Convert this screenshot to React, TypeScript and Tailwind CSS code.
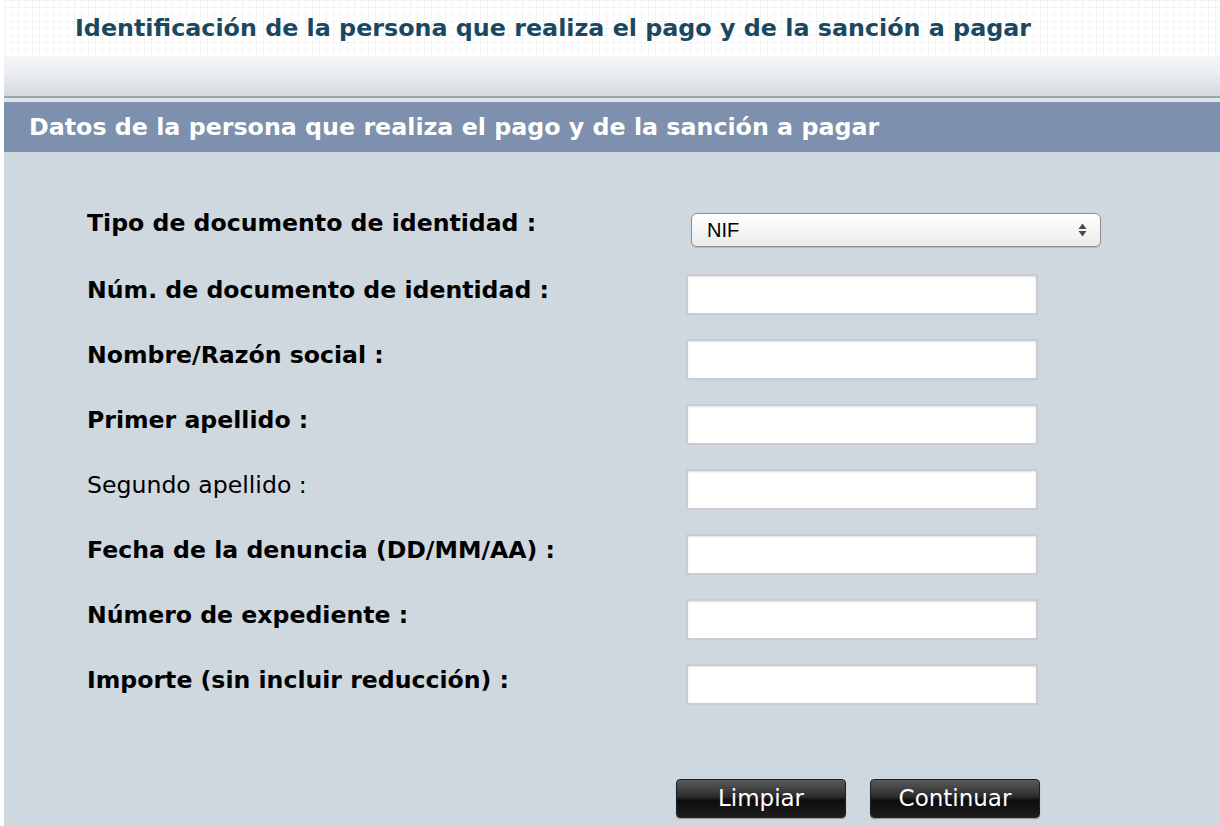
import React from 'react';

const verdana = { fontFamily: '"DejaVu Sans", Verdana, sans-serif' };

const fields: { label: string; bold: boolean }[] = [
  { label: 'Núm. de documento de identidad :', bold: true },
  { label: 'Nombre/Razón social :', bold: true },
  { label: 'Primer apellido :', bold: true },
  { label: 'Segundo apellido :', bold: false },
  { label: 'Fecha de la denuncia (DD/MM/AA) :', bold: true },
  { label: 'Número de expediente :', bold: true },
  { label: 'Importe (sin incluir reducción) :', bold: true },
];

function TextBox() {
  return (
    <div className="w-[352px] h-[41px] border-2 border-[#c9ccd0] bg-white shadow-[inset_0_1px_2px_rgba(0,0,0,0.12)]" />
  );
}

function DarkButton({ children }: { children: React.ReactNode }) {
  return (
    <button
      className="w-[170px] h-[39px] rounded-[4px] border border-[#202020] bg-[linear-gradient(to_bottom,#5a5a5a_0%,#2c2c2c_45%,#0c0c0c_55%,#1e1e1e_100%)] text-white text-[23px] leading-none shadow-[0_1px_1px_rgba(0,0,0,0.3)]"
      style={verdana}
    >
      {children}
    </button>
  );
}

export default function App() {
  return (
    <div className="w-[1220px] h-[826px] overflow-hidden bg-white pl-[4px]" style={verdana}>
      {/* Page header */}
      <div className="h-[96px] flex flex-col bg-[linear-gradient(to_right,rgba(120,130,140,0.08)_1px,transparent_1px),linear-gradient(to_bottom,rgba(120,130,140,0.08)_1px,transparent_1px)] bg-[size:7px_7px]">
        <div className="h-[56px] flex items-center pl-[71px] pt-[2px]">
          <h1 className="text-[23.8px] font-bold text-[#1b4861] whitespace-nowrap">
            Identificación de la persona que realiza el pago y de la sanción a pagar
          </h1>
        </div>
        <div className="flex-1 bg-[linear-gradient(to_bottom,rgba(245,246,248,0.7),#eceef2_40%,#d3d9df)]" />
      </div>
      <div className="h-[2px] bg-[#9aa3ac]" />
      <div className="h-[4px] bg-[#dfe3e8]" />

      {/* Section band */}
      <div className="h-[50px] bg-[#7d90ad] flex items-center pl-[25px] pt-[2px]">
        <h2 className="text-[23.75px] font-bold text-white whitespace-nowrap">
          Datos de la persona que realiza el pago y de la sanción a pagar
        </h2>
      </div>

      {/* Form body */}
      <div className="h-[674px] bg-[#cfd7df] pl-[83px] pt-[57px]">
        <div className="flex h-[65px]">
          <div className="w-[599px] text-[23.6px] leading-[28px] font-bold text-black whitespace-nowrap">
            Tipo de documento de identidad :
          </div>
          <div className="ml-[5px] mt-[4px] w-[410px] h-[34px] rounded-[6px] border border-[#8c9094] bg-[linear-gradient(to_bottom,#ffffff,#f6f6f6_50%,#ebebeb)] shadow-[0_1px_1px_rgba(0,0,0,0.15)] flex items-center justify-between pl-[15px] pr-[13px]">
            <span className="text-[20px] text-black" style={{ fontFamily: '"Liberation Sans", Arial, sans-serif' }}>
              NIF
            </span>
            <svg width="9" height="16" viewBox="0 0 9 16">
              <path d="M4.5 1.5 L8.5 7 L0.5 7 Z" fill="#4a4a4a" />
              <path d="M4.5 14.5 L8.5 9 L0.5 9 Z" fill="#4a4a4a" />
            </svg>
          </div>
        </div>

        {fields.map((f) => (
          <div key={f.label} className="flex h-[65px]">
            <div
              className={`w-[599px] mt-[2px] text-[23.6px] leading-[28px] text-black whitespace-nowrap ${
                f.bold ? 'font-bold' : 'font-normal'
              }`}
            >
              {f.label}
            </div>
            <TextBox />
          </div>
        ))}

        <div className="flex gap-[24px] pl-[589px] mt-[50px]">
          <DarkButton>Limpiar</DarkButton>
          <DarkButton>Continuar</DarkButton>
        </div>
      </div>
    </div>
  );
}
